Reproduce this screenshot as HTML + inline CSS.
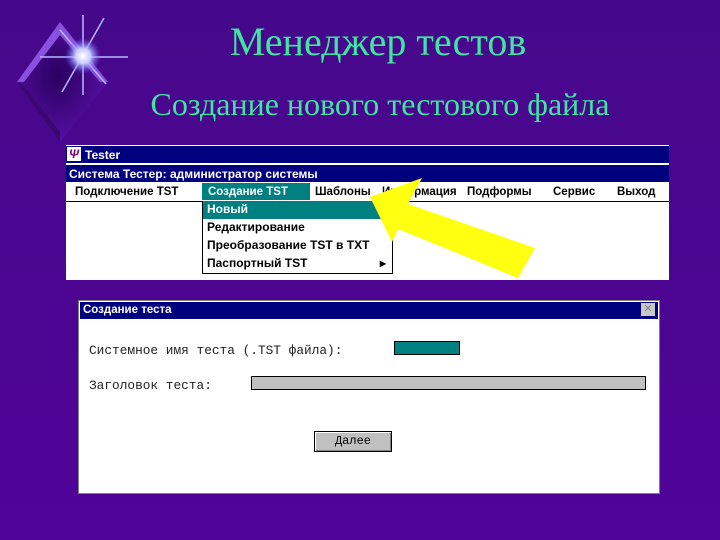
<!DOCTYPE html>
<html><head><meta charset="utf-8"><style>
body{margin:0;width:720px;height:540px;overflow:hidden;background:linear-gradient(180deg,#46088a 0%,#4c0592 60%,#50049a 100%);font-family:"Liberation Sans",sans-serif;position:relative}
.abs{position:absolute}
.t1{left:0;width:756px;text-align:center;top:18px;font:40px "Liberation Serif",serif;color:#3ee6a0}
.t2{left:0;width:760px;text-align:center;top:86px;font:32px "Liberation Serif",serif;color:#3ee6a0}
.win{background:#fff;font-weight:bold;font-size:12px;color:#000}
.bar{background:#00007e;color:#fff;font-weight:bold;font-size:12px}
.mi{position:absolute;top:3px;font-size:11.5px}
.dd div{height:18px;padding-left:4px;box-sizing:border-box;padding-top:1px}
</style></head><body>
<svg class="abs" style="left:0;top:0" width="150" height="150">
<defs><radialGradient id="g" cx="0.45" cy="0.45" r="0.6"><stop offset="0" stop-color="#2a0060"/><stop offset="1" stop-color="#5a10a8"/></radialGradient>
<radialGradient id="s"><stop offset="0" stop-color="#fff"/><stop offset="0.4" stop-color="#ccd0ff"/><stop offset="1" stop-color="#6060ff" stop-opacity="0"/></radialGradient></defs>
<polygon points="60,22 108,82 60,142 17,82" fill="url(#g)"/>
<polygon points="60,22 108,82 100,82 60,35 24,82 17,82" fill="#8a50e0"/>
<polygon points="17,82 60,142 60,132 24,86" fill="#3a0870"/>
<g stroke="#b8b8ff" stroke-width="1.5"><line x1="83" y1="15" x2="83" y2="95"/><line x1="40" y1="57" x2="128" y2="57"/><line x1="60" y1="30" x2="106" y2="84"/><line x1="104" y1="18" x2="62" y2="92"/></g>
<circle cx="83" cy="56" r="18" fill="url(#s)"/>
</svg>
<div class="abs t1">Менеджер тестов</div>
<div class="abs t2">Создание нового тестового файла</div>

<div class="abs win" style="left:66px;top:145px;width:603px;height:135px">
 <div class="abs bar" style="left:0;top:1px;width:603px;height:17px"><span style="position:absolute;left:1px;top:1px;width:14px;height:14px;background:#fff;color:#800080;font-style:italic;font-size:12px;text-align:center;line-height:14px">Ψ</span><span style="position:absolute;left:19px;top:2px">Tester</span></div>
 <div class="abs bar" style="left:0;top:20px;width:603px;height:17px"><span style="position:absolute;left:3px;top:2px">Система Тестер: администратор системы</span></div>
 <div class="abs" style="left:0;top:38px;width:603px;height:18px;border-bottom:1px solid #000">
  <span class="mi" style="left:9px">Подключение TST</span>
  <span class="mi" style="left:136px;top:0;width:108px;height:17px;background:#008080;color:#fff;padding-left:6px;box-sizing:border-box;padding-top:3px">Создание TST</span>
  <span class="mi" style="left:249px">Шаблоны</span>
  <span class="mi" style="left:316px">Информация</span>
  <span class="mi" style="left:401px">Подформы</span>
  <span class="mi" style="left:487px">Сервис</span>
  <span class="mi" style="left:551px">Выход</span>
 </div>
 <div class="abs dd" style="left:136px;top:56px;width:189px;height:72px;border:1px solid #000;border-top:none;background:#fff">
  <div style="background:#008080;color:#fff">Новый</div>
  <div>Редактирование</div>
  <div>Преобразование TST в TXT</div>
  <div style="position:relative">Паспортный TST<span style="position:absolute;right:6px;font-size:8px;top:4px">▶</span></div>
 </div>
</div>

<svg class="abs" style="left:0;top:0" width="720" height="540"><polygon points="370,197 422,178 408,204 535,248 518,278 398,229 392,242" fill="#ffff10"/></svg>

<div class="abs" style="left:78px;top:300px;width:582px;height:194px;background:#fff;border:1px solid #808080;box-sizing:border-box">
 <div class="abs bar" style="left:1px;top:1px;width:578px;height:17px"><span style="position:absolute;left:3px;top:2px;font-size:11.5px">Создание теста</span>
 <span style="position:absolute;right:3px;top:1px;width:14px;height:13px;background:#c8c8c8;color:#888;font-size:11px;text-align:center;line-height:13px;font-weight:normal">✕</span></div>
 <div class="abs" style="left:10px;top:42px;font:12.8px 'Liberation Mono',monospace;color:#222">Системное имя теста (.TST файла):</div>
 <div class="abs" style="left:315px;top:40px;width:66px;height:14px;background:#008080;border:1px solid #000;box-sizing:border-box"></div>
 <div class="abs" style="left:10px;top:77px;font:12.8px 'Liberation Mono',monospace;color:#222">Заголовок теста:</div>
 <div class="abs" style="left:172px;top:75px;width:395px;height:14px;background:#c0c0c0;border:1px solid #000;box-sizing:border-box"></div>
 <div class="abs" style="left:235px;top:130px;width:78px;height:21px;background:#c0c0c0;border:1px solid #000;box-shadow:inset 1px 1px 0 #fff,inset -1px -1px 0 #808080;box-sizing:border-box;text-align:center;font:12px 'Liberation Mono',monospace;line-height:19px">Далее</div>
</div>
</body></html>
